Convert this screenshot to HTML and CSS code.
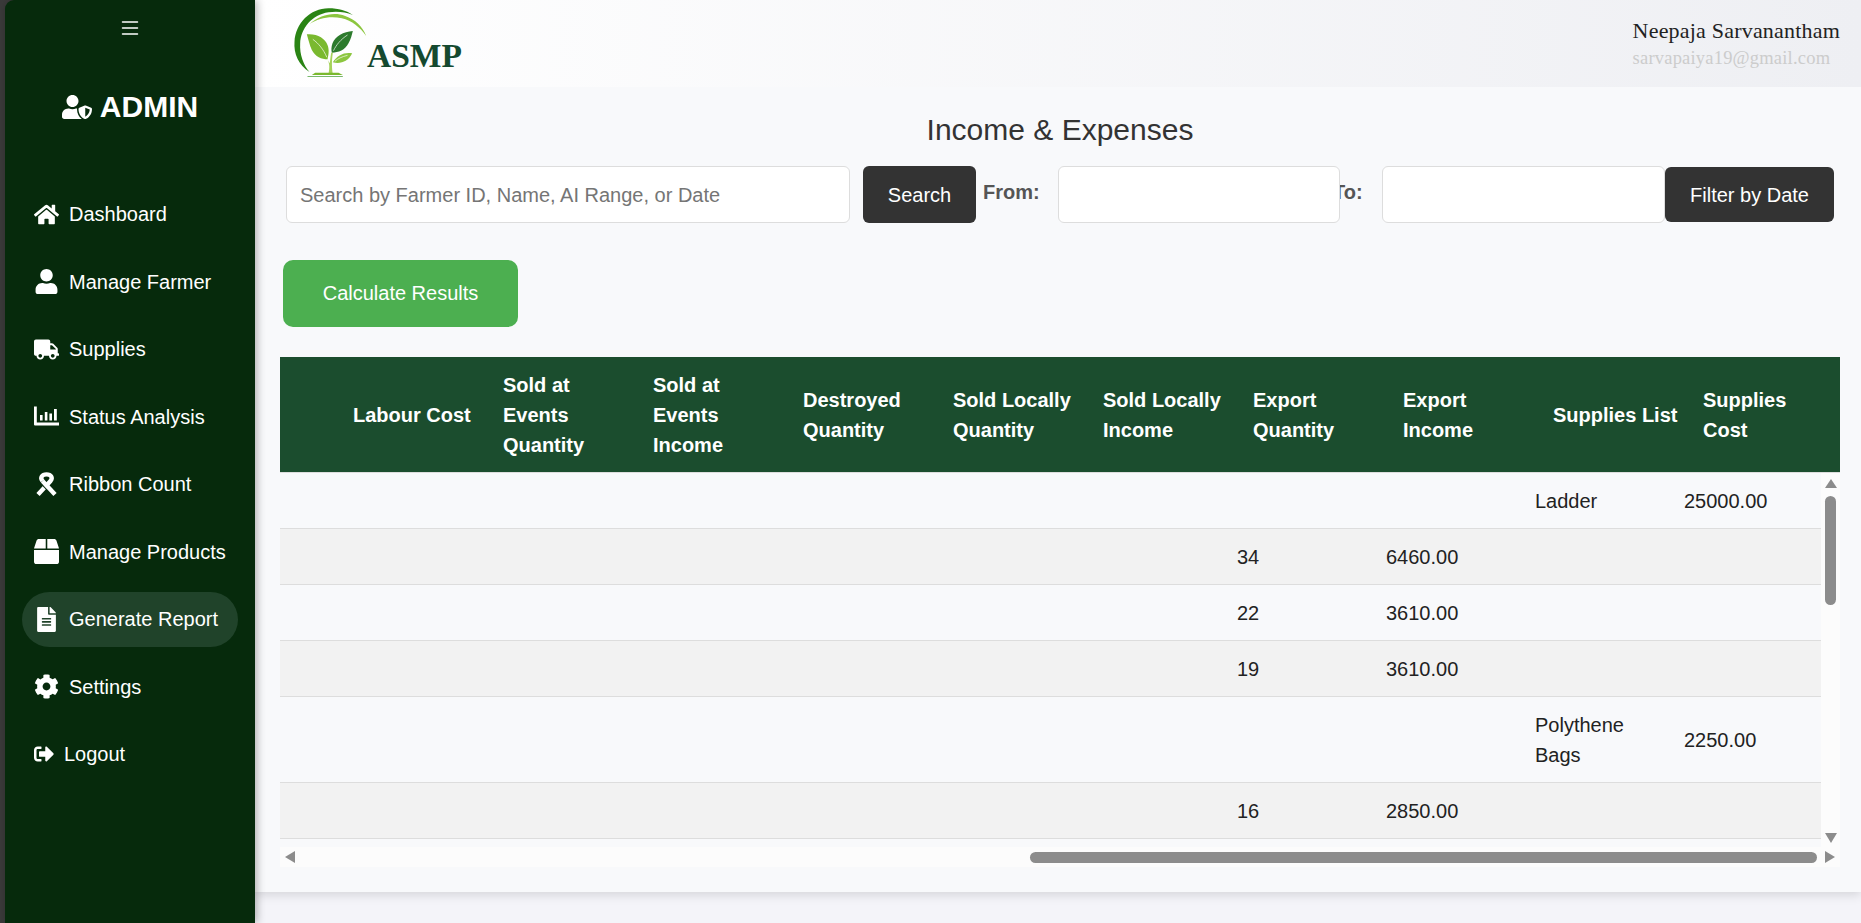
FILE: index.html
```html
<!DOCTYPE html>
<html lang="en">
<head>
<meta charset="UTF-8" />
<meta name="viewport" content="width=device-width, initial-scale=1.0">
<title>Income &amp; Expenses</title>
<link rel="stylesheet" href="styles.css">
</head>
<body>

<aside class="sidebar">
  <button class="menu-toggle" aria-label="Menu">
    <svg viewBox="0 0 16 16" width="24" height="24" fill="#fff"><path d="M2.5 12a.5.5 0 0 1 .5-.5h10a.5.5 0 0 1 0 1H3a.5.5 0 0 1-.5-.5zm0-4a.5.5 0 0 1 .5-.5h10a.5.5 0 0 1 0 1H3a.5.5 0 0 1-.5-.5zm0-4a.5.5 0 0 1 .5-.5h10a.5.5 0 0 1 0 1H3a.5.5 0 0 1-.5-.5z"/></svg>
  </button>

  <h2 class="brand">
    <svg viewBox="0 0 640 512" width="30" height="24" fill="#fff"><path d="M622.3 271.1l-115.2-45c-4.1-1.6-12.6-3.7-22.2 0l-115.2 45c-10.7 4.2-17.7 14-17.7 24.9 0 111.6 68.7 188.8 132.9 213.9 9.6 3.7 18 1.6 22.2 0C558.4 489.9 640 420.5 640 296c0-10.9-7-20.7-17.7-24.9zM496 462.4V273.3l95.5 37.3c-5.6 87.1-60.9 135.4-95.5 151.8zM224 256c70.7 0 128-57.3 128-128S294.7 0 224 0 96 57.3 96 128s57.3 128 128 128zm96 40c0-2.5.8-4.8 1.1-7.2-2.5-.1-4.9-.8-7.5-.8h-16.7c-22.2 10.2-46.9 16-72.9 16s-50.6-5.8-72.9-16h-16.7C60.2 288 0 348.2 0 422.4V464c0 26.5 21.5 48 48 48h352c6.8 0 13.3-1.5 19.2-4-54-42.9-99.2-116.7-99.2-212z"/></svg>
    ADMIN
  </h2>

  <nav class="nav">
    <a class="nav-item" href="#">
      <svg class="nav-icon" viewBox="0 0 576 512"><path d="M280.37 148.26L96 300.11V464a16 16 0 0 0 16 16l112.06-.29a16 16 0 0 0 15.92-16V368a16 16 0 0 1 16-16h64a16 16 0 0 1 16 16v95.64a16 16 0 0 0 16 16.05L464 480a16 16 0 0 0 16-16V300L295.67 148.26a12.19 12.19 0 0 0-15.3 0zM571.6 251.47L488 182.56V44.05a12 12 0 0 0-12-12h-56a12 12 0 0 0-12 12v72.61L318.47 43a48 48 0 0 0-61 0L4.34 251.47a12 12 0 0 0-1.6 16.9l25.5 31A12 12 0 0 0 45.15 301l235.22-193.74a12.19 12.19 0 0 1 15.3 0L530.9 301a12 12 0 0 0 16.9-1.6l25.5-31a12 12 0 0 0-1.7-16.93z"/></svg>
      Dashboard
    </a>
    <a class="nav-item" href="#">
      <svg class="nav-icon" viewBox="0 0 448 512"><path d="M224 256c70.7 0 128-57.3 128-128S294.7 0 224 0 96 57.3 96 128s57.3 128 128 128zm89.6 32h-16.7c-22.2 10.2-46.9 16-72.9 16s-50.6-5.8-72.9-16h-16.7C60.2 288 0 348.2 0 422.4V464c0 26.5 21.5 48 48 48h352c26.5 0 48-21.5 48-48v-41.6c0-74.2-60.2-134.4-134.4-134.4z"/></svg>
      Manage Farmer
    </a>
    <a class="nav-item" href="#">
      <svg class="nav-icon" viewBox="0 0 640 512"><path d="M624 352h-16V243.9c0-12.7-5.1-24.9-14.1-33.9L494 110.1c-9-9-21.2-14.1-33.9-14.1H416V48c0-26.5-21.5-48-48-48H48C21.5 0 0 21.5 0 48v320c0 26.5 21.5 48 48 48h16c0 53 43 96 96 96s96-43 96-96h128c0 53 43 96 96 96s96-43 96-96h48c8.8 0 16-7.2 16-16v-32c0-8.8-7.2-16-16-16zM160 464c-26.5 0-48-21.5-48-48s21.5-48 48-48 48 21.5 48 48-21.5 48-48 48zm320 0c-26.5 0-48-21.5-48-48s21.5-48 48-48 48 21.5 48 48-21.5 48-48 48zm80-208H416V144h44.1l99.9 99.9V256z"/></svg>
      Supplies
    </a>
    <a class="nav-item" href="#">
      <svg class="nav-icon" viewBox="0 0 25 25"><path d="M0 2.5h2.8v16H25v3H1a1 1 0 0 1-1-1zM6 11h2.6v5.5H6zM10.8 8h2.6v8.5h-2.6zM15.4 9.5H18v7h-2.6zM20 5h2.8v11.5H20z"/></svg>
      Status Analysis
    </a>
    <a class="nav-item" href="#">
      <svg class="nav-icon ribbon" viewBox="0 0 25 25">
        <path d="M8.5 9C5.8 5.5 8 2.4 12.5 2.4S19.2 5.5 16.5 9L4 22.6"/>
        <path class="ribbon-gap" d="M8.5 13L12.5 17.4"/>
        <path d="M8.5 9L21 22.6"/>
      </svg>
      Ribbon Count
    </a>
    <a class="nav-item" href="#">
      <svg class="nav-icon" viewBox="0 0 512 512"><path d="M509.5 184.6L458.9 32.8C452.4 13.2 434.1 0 413.4 0H272v192h238.7c-.4-2.5-.4-5-1.2-7.4zM240 0H98.6c-20.7 0-39 13.2-45.5 32.8L2.5 184.6c-.8 2.4-.8 4.9-1.2 7.4H240V0zM0 224v240c0 26.5 21.5 48 48 48h416c26.5 0 48-21.5 48-48V224H0z"/></svg>
      Manage Products
    </a>
    <a class="nav-item active" href="#">
      <svg class="nav-icon" viewBox="0 0 384 512"><path d="M224 136V0H24C10.7 0 0 10.7 0 24v464c0 13.3 10.7 24 24 24h336c13.3 0 24-10.7 24-24V160H248c-13.2 0-24-10.8-24-24zm64 236c0 6.6-5.4 12-12 12H108c-6.6 0-12-5.4-12-12v-8c0-6.6 5.4-12 12-12h168c6.6 0 12 5.4 12 12v8zm0-64c0 6.6-5.4 12-12 12H108c-6.6 0-12-5.4-12-12v-8c0-6.6 5.4-12 12-12h168c6.6 0 12 5.4 12 12v8zm0-72v8c0 6.6-5.4 12-12 12H108c-6.6 0-12-5.4-12-12v-8c0-6.6 5.4-12 12-12h168c6.6 0 12 5.4 12 12zm96-114.1v6.1H256V0h6.1c6.4 0 12.5 2.5 17 7l97.9 98c4.5 4.5 7 10.6 7 16.9z"/></svg>
      Generate Report
    </a>
    <a class="nav-item" href="#">
      <svg class="nav-icon" viewBox="0 0 512 512"><path d="M487.4 315.7l-42.6-24.6c4.3-23.2 4.3-47 0-70.2l42.6-24.6c4.9-2.8 7.1-8.6 5.5-14-11.1-35.6-30-67.8-54.7-94.6-3.8-4.1-10-5.1-14.8-2.3L380.8 110c-17.9-15.4-38.5-27.3-60.8-35.1V25.8c0-5.6-3.9-10.5-9.4-11.7-36.7-8.2-74.3-7.8-109.2 0-5.5 1.2-9.4 6.1-9.4 11.7V75c-22.2 7.9-42.8 19.8-60.8 35.1L88.7 85.5c-4.9-2.8-11-1.9-14.8 2.3-24.7 26.7-43.6 58.9-54.7 94.6-1.7 5.4.6 11.2 5.5 14L67.3 221c-4.3 23.2-4.3 47 0 70.2l-42.6 24.6c-4.9 2.8-7.1 8.6-5.5 14 11.1 35.6 30 67.8 54.7 94.6 3.8 4.1 10 5.1 14.8 2.3l42.6-24.6c17.9 15.4 38.5 27.3 60.8 35.1v49.2c0 5.6 3.9 10.5 9.4 11.7 36.7 8.2 74.3 7.8 109.2 0 5.5-1.2 9.4-6.1 9.4-11.7v-49.2c22.2-7.9 42.8-19.8 60.8-35.1l42.6 24.6c4.9 2.8 11 1.9 14.8-2.3 24.7-26.7 43.6-58.9 54.7-94.6 1.5-5.5-.7-11.3-5.6-14.1zM256 336c-44.1 0-80-35.9-80-80s35.9-80 80-80 80 35.9 80 80-35.9 80-80 80z"/></svg>
      Settings
    </a>
    <a class="nav-item" href="#">
      <svg class="nav-icon small" viewBox="0 0 512 512"><path d="M497 273L329 441c-15 15-41 4.5-41-17v-96H152c-13.3 0-24-10.7-24-24v-96c0-13.3 10.7-24 24-24h136V88c0-21.4 25.9-32 41-17l168 168c9.3 9.4 9.3 24.6 0 34zM192 436v-40c0-6.6-5.4-12-12-12H96c-17.7 0-32-14.3-32-32V160c0-17.7 14.3-32 32-32h84c6.6 0 12-5.4 12-12V76c0-6.6-5.4-12-12-12H96c-53 0-96 43-96 96v192c0 53 43 96 96 96h84c6.6 0 12-5.4 12-12z"/></svg>
      Logout
    </a>
  </nav>
</aside>

<div class="main">
  <header class="topbar">
    <div class="logo">
      <svg viewBox="66 15 230 225" width="77" height="75">
        <path fill="#2a8414" d="M118 216C85 195 70 160 73 125C76 70 120 25 175 25C205 25 230 32 248 45C225 36 200 33 175 37C125 44 92 85 90 130C88 165 100 195 118 216Z"/>
        <path fill="#8cc63f" d="M118 72C150 45 190 35 225 48C255 58 278 80 288 108C270 82 245 62 215 55C180 46 145 55 118 72Z"/>
        <path fill="#7ab92f" d="M110 103C140 100 165 115 172 135C178 150 175 165 172 178C155 178 135 170 125 150C118 135 115 120 110 103Z"/>
        <path fill="#2c7a2c" d="M248 93C220 95 195 108 187 130C183 142 183 150 185 158C205 158 225 150 235 130C242 118 245 105 248 93Z"/>
        <path fill="#8cc63f" d="M246 160C225 155 200 165 188 187C210 193 235 185 246 160Z"/>
        <path fill="none" stroke="#fff" stroke-width="2" d="M128 118C145 130 160 148 170 172M232 105C212 118 198 135 190 152M232 166C215 170 203 176 194 184"/>
        <path fill="#a5d25a" d="M170 176C180 190 178 205 175 222H188C185 205 184 185 188 158H183C181 170 180 180 179 190Z"/>
        <path fill="#7ab92f" d="M135 218H205L218 225H125Z"/>
        <path fill="#3f9a2c" opacity=".7" d="M112 228H218V231H112Z"/>
      </svg>
      <span class="logo-name">ASMP</span>
    </div>
    <div class="user">
      <div class="user-name">Neepaja Sarvanantham</div>
      <div class="user-mail">sarvapaiya19@gmail.com</div>
    </div>
  </header>

  <section class="card">
    <h1 class="title">Income &amp; Expenses</h1>

    <div class="filters">
      <input class="field search-field" type="text" placeholder="Search by Farmer ID, Name, AI Range, or Date">
      <button class="btn search-btn">Search</button>
      <label class="date-label from-label">From:</label>
      <input class="field date-field from-field" type="text">
      <label class="date-label to-label">To:</label>
      <input class="field date-field" type="text">
      <button class="btn filter-btn">Filter by Date</button>
    </div>

    <button class="calc-btn">Calculate Results</button>

    <div class="report">
      <table class="head-table">
        <colgroup>
          <col class="head-first"><col span="8" class="head-col"><col class="head-last">
        </colgroup>
        <thead>
          <tr>
            <th class="labour-head">Labour Cost</th>
            <th>Sold at<br>Events<br>Quantity</th>
            <th>Sold at<br>Events<br>Income</th>
            <th>Destroyed<br>Quantity</th>
            <th>Sold Locally<br>Quantity</th>
            <th>Sold Locally<br>Income</th>
            <th>Export<br>Quantity</th>
            <th>Export<br>Income</th>
            <th>Supplies List</th>
            <th>Supplies<br>Cost</th>
          </tr>
        </thead>
      </table>

      <div class="scroll-area">
        <div class="rows-view">
          <table class="body-table">
            <colgroup>
              <col class="body-first"><col span="8" class="body-col"><col class="body-last">
            </colgroup>
            <tbody>
              <tr><td></td><td></td><td></td><td></td><td></td><td></td><td></td><td></td><td>Ladder</td><td>25000.00</td></tr>
              <tr><td></td><td></td><td></td><td></td><td></td><td></td><td>34</td><td>6460.00</td><td></td><td></td></tr>
              <tr><td></td><td></td><td></td><td></td><td></td><td></td><td>22</td><td>3610.00</td><td></td><td></td></tr>
              <tr><td></td><td></td><td></td><td></td><td></td><td></td><td>19</td><td>3610.00</td><td></td><td></td></tr>
              <tr><td></td><td></td><td></td><td></td><td></td><td></td><td></td><td></td><td>Polythene Bags</td><td>2250.00</td></tr>
              <tr><td></td><td></td><td></td><td></td><td></td><td></td><td>16</td><td>2850.00</td><td></td><td></td></tr>
              <tr><td></td><td></td><td></td><td></td><td></td><td></td><td></td><td></td><td></td><td></td></tr>
            </tbody>
          </table>
        </div>

        <div class="vbar">
          <span class="arrow arrow-up"></span>
          <span class="vthumb"></span>
          <span class="arrow arrow-down"></span>
        </div>

        <div class="hbar">
          <span class="arrow arrow-left"></span>
          <span class="hthumb"></span>
        </div>

        <div class="corner">
          <span class="arrow arrow-right"></span>
        </div>
      </div>
    </div>
  </section>
</div>

</body>
</html>
```

FILE: styles.css
```css
* {
  box-sizing: border-box;
}

html, body {
  height: 100%;
}

body {
  margin: 0;
  display: flex;
  height: 923px;
  overflow: hidden;
  padding-left: 5px;
  background: #3a3a3a;
  font-family: "Liberation Sans", Arial, sans-serif;
  font-size: 20px;
  line-height: 30px;
  color: #333;
}

/* sidebar */
.sidebar {
  position: relative;
  z-index: 2;
  flex: 0 0 250px;
  padding-top: 16px;
  background: #062a0c;
  border-top-left-radius: 9px;
  box-shadow: 2px 0 8px rgba(0,0,0,0.3);
  color: white;
}

.menu-toggle {
  display: block;
  width: 24px;
  height: 24px;
  margin: 0 auto;
  padding: 0;
  border: none;
  background: none;
}

.menu-toggle svg {
  display: block;
}

.brand {
  display: flex;
  align-items: center;
  justify-content: center;
  gap: 8px;
  height: 36px;
  margin: 49px 0 0;
  font-size: 30px;
  line-height: 36px;
  font-weight: bold;
}

.nav {
  display: flex;
  flex-direction: column;
  gap: 12.5px;
  margin: 61.5px 17px 0;
}

.nav-item {
  display: flex;
  align-items: center;
  gap: 10px;
  height: 55px;
  padding-left: 12px;
  border-radius: 28px;
  color: white;
  text-decoration: none;
}

.nav-item.active {
  background: #20432a;
}

.nav-icon {
  flex: none;
  width: 25px;
  height: 25px;
  fill: white;
}

.nav-icon.small {
  width: 20px;
  height: 20px;
}

.nav-icon.ribbon {
  fill: none;
  stroke: white;
  stroke-width: 4.4;
}

.ribbon .ribbon-gap {
  stroke: #062a0c;
  stroke-width: 1.2;
}

/* main column */
.main {
  flex: 1;
  min-width: 0;
  background: #f4f4f9;
}

.topbar {
  position: relative;
  z-index: 1;
  display: flex;
  justify-content: space-between;
  height: 87px;
  padding: 5px 21px 0 37px;
  background: linear-gradient(to right, #ffffff, #eeeff3);
}

.logo {
  display: flex;
  align-items: flex-start;
}

.logo-name {
  margin: 31px 0 0 -2px;
  font-family: "Liberation Serif", "Times New Roman", serif;
  font-size: 33.5px;
  line-height: 40px;
  font-weight: bold;
  color: #14492f;
}

.user {
  padding-top: 11px;
  font-family: "Liberation Serif", Georgia, serif;
}

.user-name {
  font-size: 22px;
  line-height: 30px;
  letter-spacing: 0.2px;
  color: #222;
}

.user-mail {
  font-size: 18.5px;
  line-height: 25px;
  letter-spacing: 0.2px;
  color: #ccc;
}

.card {
  height: 805px;
  padding: 25px 21px 25px 25px;
  background: #f8f9fb;
  box-shadow: 0 3px 10px rgba(0,0,0,0.13);
}

.title {
  margin: 0 0 18px;
  font-size: 30px;
  line-height: 36px;
  font-weight: normal;
  text-align: center;
  color: #333;
}

.filters {
  display: flex;
  align-items: center;
  height: 57px;
  margin: 0 6px;
}

.field {
  position: relative;
  z-index: 1;
  height: 57px;
  padding: 1px 13px 0;
  border: 1px solid #ddd;
  border-radius: 6px;
  background: white;
  font: inherit;
  color: #333;
}

.field::placeholder {
  color: #757575;
  opacity: 1;
}

.search-field {
  width: 564px;
}

.date-field {
  width: 283px;
}

.from-field {
  width: 282px;
}

.btn {
  border: none;
  border-radius: 6px;
  background: #333;
  color: white;
  font: inherit;
}

.search-btn {
  width: 113px;
  height: 57px;
  margin-left: 13px;
}

.filter-btn {
  width: 169px;
  height: 55px;
}

.date-label {
  font-weight: bold;
  color: #555;
}

.from-label {
  width: 57px;
  margin: 0 18px 6px 7px;
}

.to-label {
  width: 31px;
  margin: 0 18px 6px -7px;
}

.calc-btn {
  display: block;
  width: 235px;
  height: 67px;
  margin: 37px 0 30px 3px;
  padding: 0 0 2px;
  border: none;
  border-radius: 10px;
  background: #4caf50;
  color: white;
  font: inherit;
}

.report {
  width: 1560px;
}

table {
  border-collapse: separate;
  border-spacing: 0;
  table-layout: fixed;
}

.head-table {
  width: 1560px;
}

.head-first { width: 210.5px; }
.head-col { width: 150px; }
.head-last { width: 149.5px; }

th {
  padding: 12.5px;
  border-bottom: 1px solid #ddd;
  background: #1b4d2e;
  color: white;
  text-align: left;
  white-space: nowrap;
}

th.labour-head {
  padding-left: 73px;
}

.scroll-area {
  display: grid;
  grid-template-columns: 1541px 19px;
  grid-template-rows: 374px 20px;
}

.rows-view {
  overflow: hidden;
}

.body-table {
  width: 1541px;
}

.body-first { width: 199.5px; }
.body-col { width: 149px; }
.body-last { width: 149.5px; }

td {
  height: 56px;
  padding: 12.5px;
  border-bottom: 1px solid #ddd;
  color: #222;
}

tr:nth-child(even) td {
  background: #f2f2f2;
}

/* drawn scrollbars */
.vbar, .hbar, .corner {
  display: flex;
  background: #fcfcfc;
}

.vbar {
  flex-direction: column;
  align-items: center;
  padding-top: 6px;
}

.vthumb {
  width: 11px;
  height: 109px;
  margin-top: 8px;
  border-radius: 6px;
  background: #8c8c8c;
}

.hbar {
  align-items: center;
  padding-left: 5px;
}

.hthumb {
  width: 787px;
  height: 11px;
  margin-left: 735px;
  border-radius: 6px;
  background: #8c8c8c;
}

.corner {
  align-items: center;
  padding-left: 4px;
}

.arrow {
  display: block;
  flex: none;
  width: 0;
  height: 0;
  border-style: solid;
  border-color: transparent;
}

.arrow-up {
  border-width: 0 6.5px 9px;
  border-bottom-color: #8c8c8c;
}

.arrow-down {
  margin-top: 228px;
  border-width: 10px 6.5px 0;
  border-top-color: #8c8c8c;
}

.arrow-left {
  border-width: 6px 10px 6px 0;
  border-right-color: #8c8c8c;
}

.arrow-right {
  border-width: 6px 0 6px 10px;
  border-left-color: #8c8c8c;
}
```
